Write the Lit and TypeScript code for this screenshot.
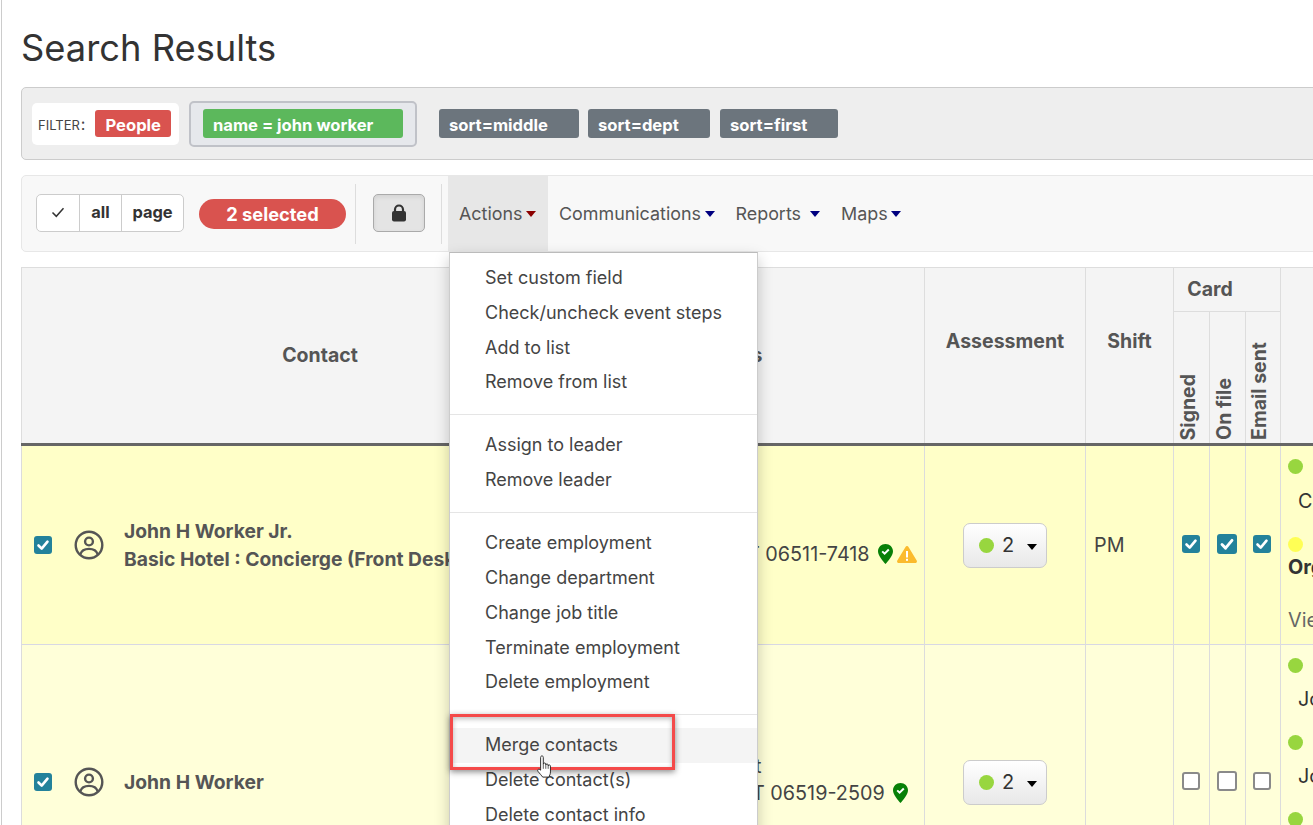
import { LitElement, html, css, svg } from 'lit';
import { customElement } from 'lit/decorators.js';

const menuGroups = [
  ['Set custom field', 'Check/uncheck event steps', 'Add to list', 'Remove from list'],
  ['Assign to leader', 'Remove leader'],
  ['Create employment', 'Change department', 'Change job title', 'Terminate employment', 'Delete employment'],
  ['Merge contacts', 'Delete contact(s)', 'Delete contact info'],
];

const userIcon = html`<svg class="user" viewBox="0 0 30 30" fill="none" stroke="#555" stroke-width="2.4">
  <circle cx="15" cy="15" r="13.3"></circle>
  <circle cx="15" cy="11.5" r="3.9"></circle>
  <path d="M6.2 24.5c1.2-3.8 4.4-5.6 8.8-5.6s7.6 1.8 8.8 5.6"></path>
</svg>`;

const pinIcon = html`<svg class="pin" viewBox="0 0 15 20">
  <path fill="#088008" d="M7.5 0C3.3 0 0 3.2 0 7.2c0 4.6 5.2 10 7.5 12.8C9.8 17.2 15 11.8 15 7.2 15 3.2 11.7 0 7.5 0z"></path>
  <path fill="none" stroke="#fff" stroke-width="2" d="M4.2 7.4l2.4 2.3 4.2-4.2"></path>
</svg>`;

const warnIcon = html`<svg class="warn" viewBox="0 0 20 17">
  <path fill="#fbbb2d" d="M10 0c.7 0 1.2.4 1.5.9l8.2 13.7c.6 1 0 2.4-1.4 2.4H1.7C.3 17-.3 15.6.3 14.6L8.5.9C8.8.4 9.3 0 10 0z"></path>
  <rect x="9" y="5" width="2" height="6.5" fill="#fff"></rect>
  <rect x="9" y="12.8" width="2" height="2" fill="#fff"></rect>
</svg>`;

const tick = svg`<path fill="none" stroke="#fff" stroke-width="2.6" stroke-linecap="round" stroke-linejoin="round" d="M4.5 9.5l3.2 3.2 5.8-7"></path>`;

const box = (checked: boolean, wide = false) => html`<span class="box ${checked ? 'on' : ''} ${wide ? 'wide' : ''}">
  ${checked ? html`<svg viewBox="0 0 18 18">${tick}</svg>` : ''}
</span>`;

const assess = html`<div class="assess"><span class="dot green"></span><span class="num">2</span><span class="caret black"></span></div>`;

@customElement('app-root')
export class AppRoot extends LitElement {
  static styles = css`
    :host {
      display: block;
      width: 1313px;
      height: 825px;
      overflow: hidden;
      position: relative;
      background: #fff;
      font-family: Inter, 'Noto Sans', sans-serif;
      color: #333;
    }
    .page {
      margin-left: 1px;
      border-left: 1px solid #ccc;
      padding-left: 19px;
      height: 825px;
      width: 1500px;
    }
    h1 {
      margin: 0;
      padding-top: 27px;
      height: 87px;
      box-sizing: border-box;
      font-size: 36.3px;
      line-height: 42px;
      font-weight: 400;
      color: #333;
    }
    .filters {
      height: 73px;
      box-sizing: border-box;
      background: #eee;
      border: 1px solid #ccc;
      border-radius: 5px;
      display: flex;
      align-items: center;
      padding-left: 10px;
      margin-bottom: 15px;
    }
    .label {
      background: #fff;
      border-radius: 5px;
      width: 147px;
      height: 42px;
      box-sizing: border-box;
      padding-left: 6px;
      display: flex;
      align-items: center;
      font-size: 13px;
      color: #444;
      margin-right: 10px;
    }
    .label .word { margin-top: 2px; }
    .label .colon { font-size: 16px; margin: 0 10px 0 1px; }
    .tag {
      height: 29px;
      line-height: 33px;
      border-radius: 3px;
      color: #fff;
      font-weight: 700;
      font-size: 16.6px;
      box-sizing: border-box;
      padding-left: 10px;
      white-space: nowrap;
    }
    .tag.red { background: #d9534f; width: 76px; height: 27px; line-height: 31px; }
    .tag.ok { background: #5cb85c; width: 200px; }
    .tag.grey { background: #6c757d; margin-right: 9px; }
    .tag.middle { width: 140px; }
    .tag.dept { width: 122px; margin-right: 10px; }
    .tag.first { width: 118px; }
    .group {
      width: 228px;
      height: 46px;
      box-sizing: border-box;
      border: 2px solid #c0c2c8;
      border-radius: 5px;
      background: #e6e8ec;
      display: flex;
      align-items: center;
      padding-left: 12px;
      margin-right: 22px;
    }
    .toolbar {
      height: 77px;
      box-sizing: border-box;
      background: #f8f8f8;
      border: 1px solid #e7e7e7;
      border-radius: 5px;
      display: flex;
      align-items: center;
      padding-left: 14px;
      margin-bottom: 15px;
    }
    .checks {
      display: flex;
      height: 38px;
      box-sizing: border-box;
      border: 1px solid #ccc;
      border-radius: 5px;
      background: #fff;
      font-weight: 700;
      font-size: 16.4px;
      color: #333;
      margin-bottom: 2px;
    }
    .checks span {
      display: flex;
      align-items: center;
      justify-content: center;
      border-left: 1px solid #ccc;
      padding-bottom: 1px;
    }
    .checks span:first-child { border-left: 0; width: 42px; }
    .checks span:nth-child(2) { width: 41px; }
    .checks span:nth-child(3) { width: 61px; }
    .checks svg { width: 14px; height: 14px; }
    .pill {
      margin-left: 15px;
      width: 147px;
      height: 30px;
      line-height: 30px;
      border-radius: 15px;
      background: #d9534f;
      color: #fff;
      font-weight: 700;
      font-size: 18.3px;
      text-align: center;
    }
    .sep { width: 1px; height: 60px; background: #ddd; }
    .pill + .sep { margin-left: 9px; }
    .lock {
      margin: 0 16px 2px 17px;
      width: 52px;
      height: 38px;
      box-sizing: border-box;
      border: 1px solid #aaa;
      border-radius: 5px;
      background: #e4e4e4;
      box-shadow: inset 0 2px 4px rgba(0, 0, 0, 0.08);
      display: flex;
      align-items: center;
      justify-content: center;
    }
    .lock svg { width: 16px; height: 18px; }
    .nav {
      align-self: stretch;
      display: flex;
      align-items: center;
      font-size: 17.9px;
      color: #555;
      margin-left: 6px;
    }
    .nav div {
      height: 100%;
      display: flex;
      align-items: center;
      padding-left: 11px;
      white-space: nowrap;
    }
    .nav .open { background: #e7e7e7; width: 100px; box-sizing: border-box; }
    .nav .next { margin-left: 10px; }
    .caret {
      display: inline-block;
      width: 0;
      height: 0;
      border-left: 5.5px solid transparent;
      border-right: 5.5px solid transparent;
      border-top: 6px solid #000080;
      margin-left: 3.5px;
    }
    .caret.dark { border-top-color: #8b0000; }
    .caret.spaced { margin-left: 9px; }
    .caret.black {
      border-top-color: #000;
      margin-left: 13px;
      margin-top: 3px;
    }

    table {
      border-collapse: collapse;
      table-layout: fixed;
      width: 1379px;
      font-size: 19.8px;
    }
    col:nth-child(1) { width: 597px; }
    col:nth-child(2) { width: 306px; }
    col:nth-child(3) { width: 161px; }
    col:nth-child(4) { width: 88px; }
    col:nth-child(5), col:nth-child(6) { width: 36px; }
    col:nth-child(7) { width: 35px; }
    col:nth-child(8) { width: 120px; }
    th {
      background: #f4f4f4;
      border: 1px solid #ddd;
      color: #555;
      font-size: 19.5px;
      font-weight: 700;
      padding: 0 0 2px;
      text-align: center;
    }
    thead tr:first-child { height: 44px; }
    thead tr:last-child { height: 133px; }
    th.card { padding-right: 34px; }
    th.lift { padding-bottom: 30px; }
    th.addr { padding-right: 98px; }
    th.vert {
      vertical-align: bottom;
      padding: 0 8px 3px 0;
    }
    .vert span {
      writing-mode: vertical-rl;
      transform: rotate(180deg);
      display: inline-block;
      vertical-align: bottom;
      white-space: nowrap;
    }
    tbody tr { border-top: 3px solid #666; }
    tbody tr.one { background: #ffffc8; height: 200px; }
    tbody tr.two { background: #ffffd9; height: 275px; border-top: 1px solid #d8d8e4; }
    td {
      border-left: 1px solid #dcdcdc;
      border-right: 1px solid #dcdcdc;
      padding: 0;
      vertical-align: middle;
      color: #444;
      white-space: nowrap;
      overflow: hidden;
    }
    .who {
      display: flex;
      align-items: center;
      padding-left: 12px;
      font-weight: 700;
      font-size: 19.3px;
      color: #555;
      line-height: 28px;
    }
    .user { width: 30px; height: 30px; margin: 0 20px 0 22px; flex: none; }
    .box {
      display: inline-block;
      width: 18px;
      height: 18px;
      box-sizing: border-box;
      border: 2px solid #8a8a8a;
      border-radius: 3px;
      background: #fff;
      vertical-align: middle;
      flex: none;
    }
    .box.wide { width: 20px; height: 20px; }
    .box.on { background: #23829b; border: 0; }
    .box svg { display: block; width: 100%; height: 100%; }
    td.center { text-align: center; padding: 0 2px 6px 0; }
    .address { padding-left: 128px; padding-top: 18px; line-height: 27px; }
    td.a2 { padding-left: 133px; padding-top: 0; padding-bottom: 5px; }
    .address div { display: flex; align-items: center; }
    .address .tail { padding-left: 3px; }
    .pin { width: 15px; height: 20px; margin-left: 8px; }
    .warn { width: 20px; height: 17px; margin-left: 4px; }
    .assess {
      width: 84px;
      height: 45px;
      box-sizing: border-box;
      margin: 0 auto;
      border: 1px solid #ccc;
      border-radius: 7px;
      background: linear-gradient(#fff, #e8e8e8);
      display: flex;
      align-items: center;
      padding-left: 15px;
      font-size: 20px;
      color: #333;
    }
    .dot {
      display: inline-block;
      width: 15px;
      height: 15px;
      border-radius: 50%;
      flex: none;
    }
    .dot.green { background: #98d63f; }
    .dot.yellow { background: #ffff55; }
    .num { margin-left: 8px; }
    .shift { padding-left: 8px; }
    .last { vertical-align: top; padding-left: 7px; color: #333; }
    .last p { margin: 0; line-height: 22px; }
    .indent { padding-left: 10px; }
    .r1 .dot { margin-top: 13px; }
    .r1 .c { margin-top: 11px; }
    .r1 .y { margin-top: 25px; }
    .r1 .org { font-weight: 700; margin-top: -1px; }
    .r1 .vie { margin-top: 31px; color: #666; }
    .r2 .dot { margin-top: 13px; }
    .r2 .j { margin-top: 10px; }
    .r2 .k { margin-top: 25px; }

    .menu {
      position: absolute;
      left: 449px;
      top: 252px;
      width: 309px;
      height: 600px;
      box-sizing: border-box;
      background: #fff;
      border: 1px solid #ccc;
      border-top-color: #bbb;
      box-shadow: 0 6px 14px rgba(0, 0, 0, 0.22);
      padding-top: 8px;
      color: #444;
      font-size: 18px;
    }
    .menu .item {
      height: 34.75px;
      line-height: 34.75px;
      padding-left: 35px;
      white-space: nowrap;
    }
    .menu .hover { background: #f4f4f4; }
    .menu hr {
      border: 0;
      border-top: 1px solid #e5e5e5;
      margin: 13.7px 0;
    }
    .mark {
      position: absolute;
      left: 450px;
      top: 714px;
      width: 225px;
      height: 56px;
      box-sizing: border-box;
      border: 3px solid #f44a4a;
      box-shadow: 0 2px 6px rgba(0, 0, 0, 0.45), inset 0 2px 5px rgba(0, 0, 0, 0.25);
    }
    .hand {
      position: absolute;
      left: 537px;
      top: 755px;
      width: 15px;
      height: 23px;
    }
  `;

  render() {
    return html`
      <div class="page">
        <h1>Search Results</h1>
        <div class="filters">
          <div class="label"><span class="word">FILTER</span><span class="colon">:</span><div class="tag red">People</div></div>
          <div class="group"><div class="tag ok">name = john worker</div></div>
          <div class="tag grey middle">sort=middle</div>
          <div class="tag grey dept">sort=dept</div>
          <div class="tag grey first">sort=first</div>
        </div>
        <div class="toolbar">
          <div class="checks">
            <span><svg viewBox="0 0 14 14" fill="none" stroke="#333" stroke-width="1.5"><path d="M1.5 7.5l3.8 3.8 7.2-8"></path></svg></span>
            <span>all</span>
            <span>page</span>
          </div>
          <div class="pill">2 selected</div>
          <div class="sep"></div>
          <div class="lock">
            <svg viewBox="0 0 16 18"><path fill="none" stroke="#333" stroke-width="2.2" d="M4 8V5.5a4 4 0 0 1 8 0V8"></path><rect x="1" y="7" width="14" height="10.5" rx="2" fill="#333"></rect></svg>
          </div>
          <div class="sep"></div>
          <div class="nav">
            <div class="open">Actions<span class="caret dark"></span></div>
            <div>Communications<span class="caret"></span></div>
            <div class="next">Reports<span class="caret spaced"></span></div>
            <div class="next">Maps<span class="caret"></span></div>
          </div>
        </div>
        <table>
          <colgroup>
            <col /><col /><col /><col /><col /><col /><col /><col />
          </colgroup>
          <thead>
            <tr>
              <th rowspan="2">Contact</th>
              <th rowspan="2" class="addr">Address</th>
              <th rowspan="2" class="lift">Assessment</th>
              <th rowspan="2" class="lift">Shift</th>
              <th colspan="3" class="card">Card</th>
              <th rowspan="2"></th>
            </tr>
            <tr>
              <th class="vert"><span>Signed</span></th>
              <th class="vert"><span>On file</span></th>
              <th class="vert"><span>Email sent</span></th>
            </tr>
          </thead>
          <tbody>
            <tr class="one">
              <td><div class="who">${box(true)}${userIcon}<div>John H Worker Jr.<br />Basic Hotel : Concierge (Front Desk)</div></div></td>
              <td class="address"><div><span>T 06511-7418</span>${pinIcon}${warnIcon}</div></td>
              <td>${assess}</td>
              <td class="shift">PM</td>
              <td class="center">${box(true)}</td>
              <td class="center">${box(true, true)}</td>
              <td class="center">${box(true)}</td>
              <td class="last r1">
                <span class="dot green"></span>
                <p class="indent c">C</p>
                <span class="dot yellow y"></span>
                <p class="org">Org</p>
                <p class="vie">Vie</p>
              </td>
            </tr>
            <tr class="two">
              <td><div class="who">${box(true)}${userIcon}<div>John H Worker</div></div></td>
              <td class="address a2"><div class="tail">t</div><div><span>T 06519-2509</span>${pinIcon}</div></td>
              <td>${assess}</td>
              <td></td>
              <td class="center">${box(false)}</td>
              <td class="center">${box(false, true)}</td>
              <td class="center">${box(false)}</td>
              <td class="last r2">
                <span class="dot green"></span>
                <p class="indent j">Jo</p>
                <span class="dot green k"></span>
                <p class="indent j">Jo</p>
                <span class="dot green k"></span>
              </td>
            </tr>
          </tbody>
        </table>
      </div>
      <div class="menu">
        ${menuGroups.map(
          (group, i) => html`
            ${i > 0 ? html`<hr />` : ''}
            ${group.map(
              (label) => html`<div class="item ${label === 'Merge contacts' ? 'hover' : ''}">${label}</div>`
            )}
          `
        )}
      </div>
      <div class="mark"></div>
      <svg class="hand" viewBox="1 1 14.5 21.5">
        <path fill="#fff" stroke="#222" stroke-width="0.9" stroke-linejoin="round"
          d="M4.5 14V3c0-2 2.6-2 2.6 0v6.5c0-1.5 2.4-1.5 2.4 0v.8c0-1.400 2.300-1.400 2.300 0v.9c0-1.300 2.200-1.300 2.200.2v5.600c0 2.500-1 3.500-1.500 5H6.500C5.500 20.500 3.500 18.500 2 16.500c-1.200-1.700.8-3.100 2.500-1.200z"></path>
        <path fill="none" stroke="#222" stroke-width="0.7" d="M7.1 9.5v4.5M9.5 10.300v3.700M11.800 11.200v2.800"></path>
      </svg>
    `;
  }
}
